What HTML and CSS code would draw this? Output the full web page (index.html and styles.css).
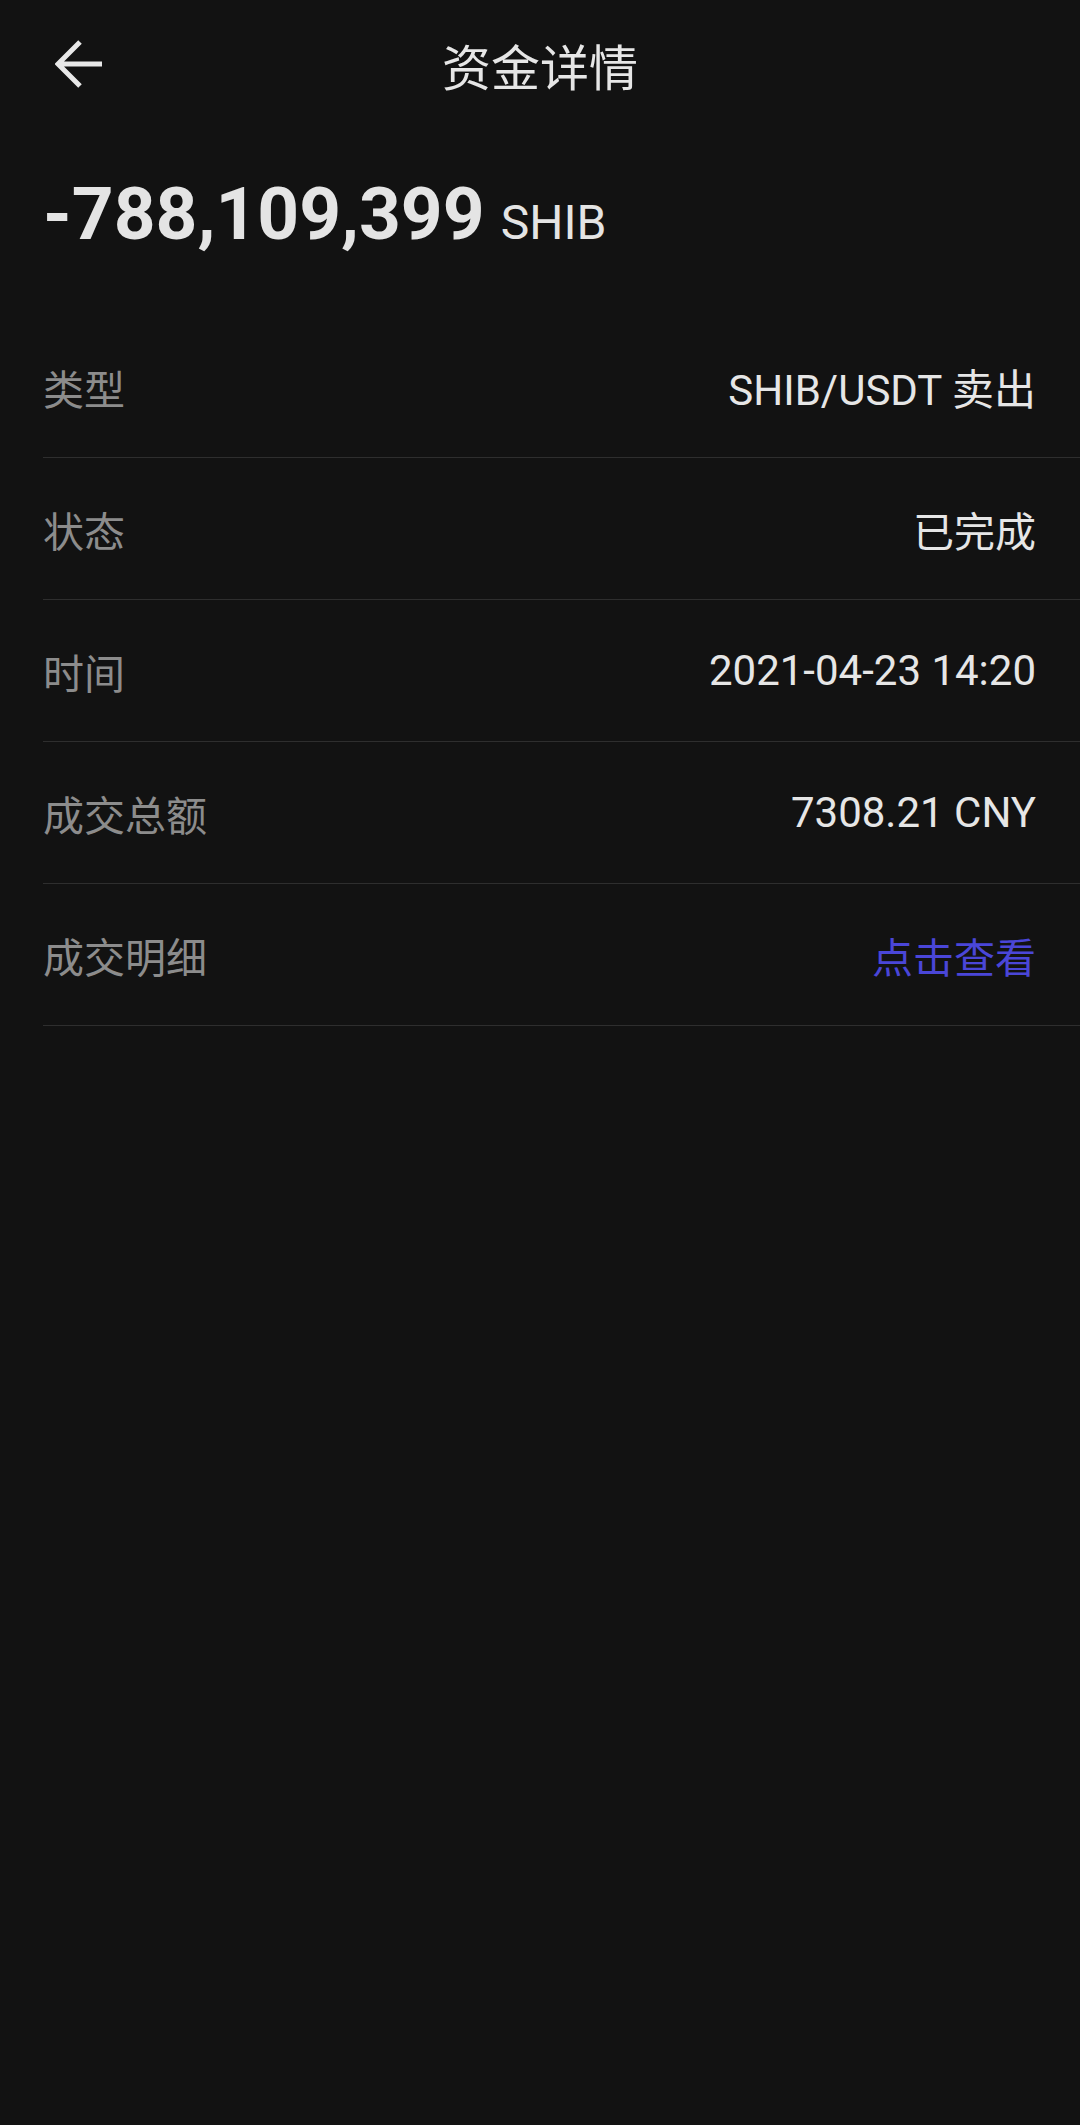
FILE: index.html
```html
<!DOCTYPE html>
<html lang="zh-CN">
<head>
    <meta charset="UTF-8">
    <meta name="viewport" content="width=device-width, initial-scale=1.0">
    <title>资金详情</title>
    <link rel="stylesheet" href="styles.css">
</head>
<body>
    <div class="header">
        <div class="back">
            <svg width="50" height="48" viewBox="0 0 50 48">
                <path d="M3 24 H47 M25 2 L3 24 L25 46" fill="none" stroke="#e8e8e8" stroke-width="5"/>
            </svg>
        </div>
        <div class="title">资金详情</div>
        <div></div>
    </div>

    <div class="amount">
        <span class="amount-num">-788,109,399</span><span class="amount-unit">SHIB</span>
    </div>

    <div class="rows">
        <div class="row">
            <span class="label">类型</span>
            <span class="value">SHIB/USDT 卖出</span>
        </div>
        <div class="row">
            <span class="label">状态</span>
            <span class="value cjk">已完成</span>
        </div>
        <div class="row">
            <span class="label">时间</span>
            <span class="value">2021-04-23 14:20</span>
        </div>
        <div class="row">
            <span class="label">成交总额</span>
            <span class="value">7308.21 CNY</span>
        </div>
        <div class="row">
            <span class="label">成交明细</span>
            <span class="value cjk link">点击查看</span>
        </div>
    </div>
</body>
</html>
```

FILE: styles.css
```css
body {
    margin: 0;
    background: #121212;
    color: #e6e6e6;
    font-family: Roboto, "Noto Sans CJK SC", sans-serif;
}
.header {
    height: 128px;
    display: grid;
    grid-template-columns: 1fr auto 1fr;
    align-items: center;
}
.back {
    padding-left: 55px;
    display: flex;
    align-items: center;
}
.title {
    font-size: 49px;
    color: #e6e6e6;
}
.amount {
    padding: 42px 43px 58px;
    font-size: 73px;
    line-height: 88px;
    white-space: nowrap;
}
.amount-num {
    font-weight: bold;
    color: #e4e4e4;
}
.amount-unit {
    font-size: 48px;
    line-height: 1;
    margin-left: 16px;
    color: #e4e4e4;
}
.row {
    height: 141px;
    margin-left: 43px;
    padding-right: 44px;
    border-bottom: 1px solid #2e2e2e;
    display: flex;
    align-items: center;
    justify-content: space-between;
    font-size: 42px;
}
.label {
    font-size: 41px;
    color: #8c8c8c;
}
.value {
    color: #e6e6e6;
}
.cjk {
    font-size: 41px;
}
.link {
    color: #4a46d8;
}
```
